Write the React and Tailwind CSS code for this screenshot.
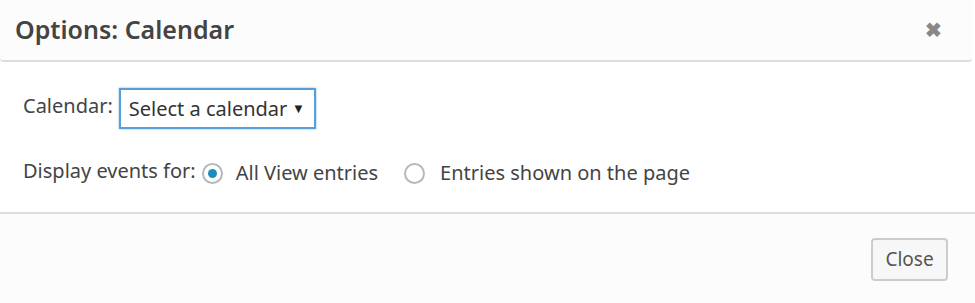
import React from "react";

export default function App() {
  const font = { fontFamily: '"Noto Sans", "Open Sans", sans-serif' };
  return (
    <div className="w-[975px] h-[303px] bg-white flex flex-col text-[#444]" style={font}>
      <div className="h-[62px] bg-[#fcfcfc] border-b-2 border-[#dddddd] rounded-b-[4px] mr-[3px] flex items-center justify-between pl-[15px] pr-[30px]">
        <h1 className="text-[25px] font-semibold text-[#444] leading-none -mt-[2px]">Options: Calendar</h1>
        <span className="text-[#888] text-[20px] font-bold leading-none">✖</span>
      </div>
      <div className="flex-1 flex flex-col px-[23px] pt-[26px]">
        <div className="flex items-center gap-[6px]">
          <span className="text-[20px] leading-none -mt-[6px]">Calendar:</span>
          <div className="w-[197px] h-[41px] border-2 border-[#5b9dd9] shadow-[0_0_2px_rgba(30,140,190,0.6)] flex items-center justify-between pl-[8px] pr-[9px]">
            <span className="text-[20px] text-[#333] leading-none">Select a calendar</span>
            <span className="text-[13px] text-[#222]">▼</span>
          </div>
        </div>
        <div className="flex items-center mt-[30px] h-[28px]">
          <span className="text-[20px] leading-none -mt-[4px]">Display events for:</span>
          <span className="ml-[6px] w-[21px] h-[21px] rounded-full border-2 border-[#b4b9be] flex items-center justify-center">
            <span className="w-[9px] h-[9px] rounded-full bg-[#1e8cbe]" />
          </span>
          <span className="ml-[13px] text-[20px] leading-none">All View entries</span>
          <span className="ml-[26px] w-[21px] h-[21px] rounded-full border-2 border-[#b4b9be]" />
          <span className="ml-[15px] text-[20px] leading-none">Entries shown on the page</span>
        </div>
      </div>
      <div className="h-[91px] bg-[#fcfcfc] border-t-2 border-[#dddddd] flex items-center justify-end pr-[27px]">
        <button className="w-[77px] h-[43px] mt-[2px] border-2 border-[#cccccc] rounded-[4px] bg-[#f7f7f7] text-[19px] text-[#555] leading-none">Close</button>
      </div>
    </div>
  );
}
